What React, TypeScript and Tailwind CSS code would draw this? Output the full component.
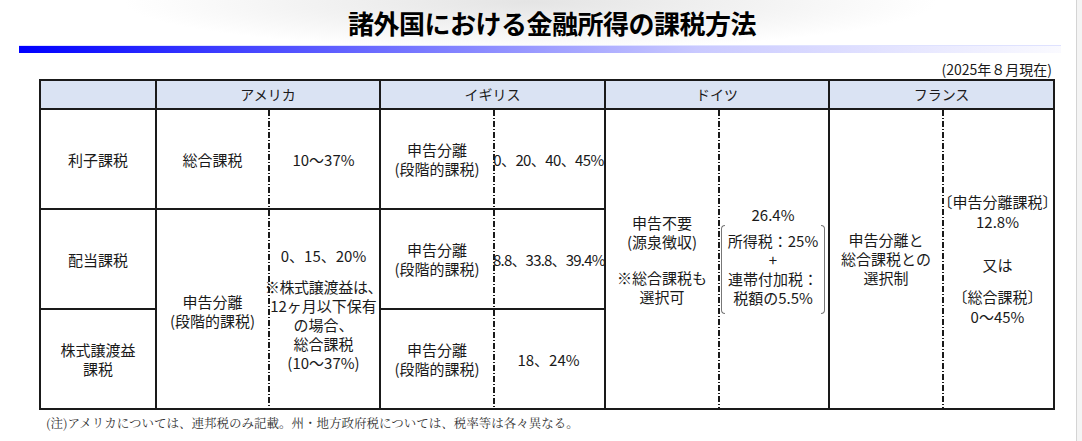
import React from "react";

export default function App() {
  const cell =
    "border-r-2 border-b-2 border-[#1a1a1a] text-center align-middle p-0";
  const cellNoR = "border-b-2 border-[#1a1a1a] text-center align-middle p-0";
  const dash =
    "bg-[image:repeating-linear-gradient(to_bottom,#1a1a1a_0px,#1a1a1a_6px,transparent_6px,transparent_8px,#1a1a1a_8px,#1a1a1a_9px,transparent_9px,transparent_11px)] bg-[length:2px_100%] bg-no-repeat bg-left";
  const head =
    "border-r-2 border-b-2 border-[#1a1a1a] bg-[#dae3f3] text-center align-middle p-0 text-[14px] font-normal";

  return (
    <div className="relative w-[1082px] h-[441px] overflow-hidden bg-white text-[#1a1a1a] font-['Noto_Sans_CJK_JP',sans-serif]">
      <div className="absolute left-[120px] top-[-46px] w-[820px] h-[96px] rounded-full bg-[radial-gradient(ellipse_at_center,#e4e4e4_0%,#f3f3f3_40%,rgba(255,255,255,0)_70%)]" />
      <div className="absolute right-0 top-0 h-full w-[6px] border-l border-[#d4d4d4] bg-[#f4f4f4]" />

      <div className="relative flex flex-col">
        <div className="h-[45px] flex items-center justify-center pl-[22px]">
          <h1 className="text-[26px] leading-[30px] font-bold tracking-[-0.5px] text-black">
            諸外国における金融所得の課税方法
          </h1>
        </div>
        <div className="ml-[19px] w-[1042px] h-[8px] border-t border-[#dfe2ff] bg-[linear-gradient(to_right,#0000ff,#6e6eff_35%,#c9c9ff_65%,#fafaff)]" />
        <div className="h-[26px] flex items-end justify-end pr-[30px] pb-[1px]">
          <span className="text-[14px] leading-[18px]">(2025年８月現在)</span>
        </div>

        <table className="ml-[39px] w-[1014px] table-fixed border-separate border-spacing-0 border-t-2 border-l-2 border-[#1a1a1a] text-[15px] leading-[19px]">
          <colgroup>
            <col className="w-[116px]" />
            <col className="w-[111px]" />
            <col className="w-[113px]" />
            <col className="w-[112px]" />
            <col className="w-[113px]" />
            <col className="w-[112px]" />
            <col className="w-[112px]" />
            <col className="w-[112px]" />
            <col className="w-[113px]" />
          </colgroup>
          <thead>
            <tr className="h-[29px]">
              <th className={head}></th>
              <th className={head} colSpan={2}>アメリカ</th>
              <th className={head} colSpan={2}>イギリス</th>
              <th className={head} colSpan={2}>ドイツ</th>
              <th className={head} colSpan={2}>フランス</th>
            </tr>
          </thead>
          <tbody>
            <tr className="h-[100px]">
              <td className={cell}>利子課税</td>
              <td className={cellNoR}>総合課税</td>
              <td className={`${cell} ${dash}`}>10～37%</td>
              <td className={cellNoR}>
                申告分離
                <br />
                (段階的課税)
              </td>
              <td className={`${cell} ${dash} whitespace-nowrap`}>
                <span className="tracking-[-0.6px]">0、20、40、45%</span>
              </td>
              <td className={cellNoR} rowSpan={3}>
                <div className="flex flex-col items-center">
                  <span>申告不要</span>
                  <span>(源泉徴収)</span>
                  <span className="h-[17px]" />
                  <span>※総合課税も</span>
                  <span>選択可</span>
                </div>
              </td>
              <td className={`${cell} ${dash}`} rowSpan={3}>
                <div className="flex flex-col items-center">
                  <span>26.4%</span>
                  <div className="flex items-stretch mt-[1px]">
                    <div className="w-[4px] border-l border-y border-[#777] rounded-l-[4px]" />
                    <div className="flex flex-col items-center w-[96px] pt-[6px] pb-[7px]">
                      <span>所得税：25%</span>
                      <span>+</span>
                      <span>連帯付加税：</span>
                      <span>税額の5.5%</span>
                    </div>
                    <div className="w-[4px] border-r border-y border-[#777] rounded-r-[4px]" />
                  </div>
                </div>
              </td>
              <td className={cellNoR} rowSpan={3}>
                <div className="flex flex-col items-center leading-[19px] pb-[2px]">
                  <span>申告分離と</span>
                  <span>総合課税との</span>
                  <span>選択制</span>
                </div>
              </td>
              <td className={`${cell} ${dash}`} rowSpan={3}>
                <div className="flex flex-col items-center leading-[20px]">
                  <span className="whitespace-nowrap">〔申告分離課税〕</span>
                  <span>12.8%</span>
                  <span className="h-[23px]" />
                  <span>又は</span>
                  <span className="h-[12px]" />
                  <span>〔総合課税〕</span>
                  <span>0～45%</span>
                </div>
              </td>
            </tr>
            <tr className="h-[100px]">
              <td className={cell}>配当課税</td>
              <td className={cellNoR} rowSpan={2}>
                <div className="pt-[3px]">
                  申告分離
                  <br />
                  (段階的課税)
                </div>
              </td>
              <td className={`${cell} ${dash}`} rowSpan={2}>
                <div className="flex flex-col items-center">
                  <span className="mb-[12px]">0、15、20%</span>
                  <span className="whitespace-nowrap tracking-[-0.3px]">※株式譲渡益は、</span>
                  <span>12ヶ月以下保有</span>
                  <span>の場合、</span>
                  <span>総合課税</span>
                  <span>(10～37%)</span>
                </div>
              </td>
              <td className={cellNoR}>
                申告分離
                <br />
                (段階的課税)
              </td>
              <td className={`${cell} ${dash} whitespace-nowrap`}>
                <span className="tracking-[-0.8px]">8.8、33.8、39.4%</span>
              </td>
            </tr>
            <tr className="h-[100px]">
              <td className={cell}>
                株式譲渡益
                <br />
                課税
              </td>
              <td className={cellNoR}>
                申告分離
                <br />
                (段階的課税)
              </td>
              <td className={`${cell} ${dash}`}>18、24%</td>
            </tr>
          </tbody>
        </table>

        <div className="mt-[5px] pl-[46px] text-[12.5px] leading-[16px] text-[#333] font-['Noto_Serif_CJK_JP','Noto_Sans_CJK_JP',serif]">
          (注)アメリカについては、連邦税のみ記載。州・地方政府税については、税率等は各々異なる。
        </div>
      </div>
    </div>
  );
}
